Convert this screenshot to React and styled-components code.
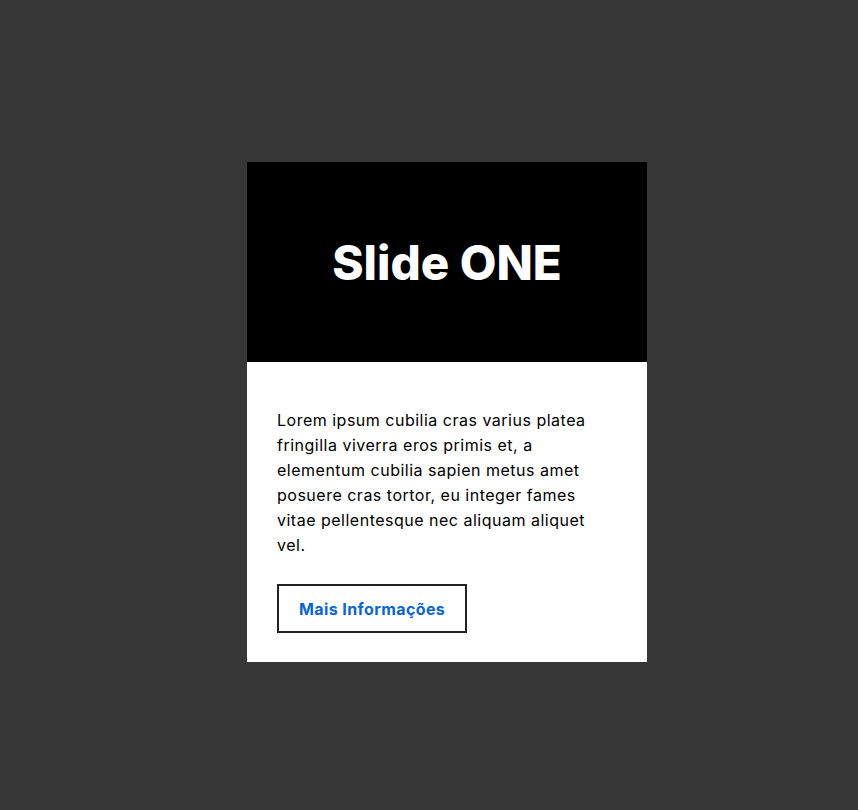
import React from 'react';
import styled, { createGlobalStyle } from 'styled-components';

const GlobalStyle = createGlobalStyle`
  html, body {
    margin: 0;
    background: #373737;
  }
  body {
    font-family: Inter, "Noto Sans", sans-serif;
  }
`;

export default function App() {
  return (
    <StPage>
      <GlobalStyle />
      <StCard>
        <StHeader>
          <h1>Slide ONE</h1>
        </StHeader>
        <StBody>
          <p>
            Lorem ipsum cubilia cras varius platea fringilla viverra eros primis et, a
            elementum cubilia sapien metus amet posuere cras tortor, eu integer fames
            vitae pellentesque nec aliquam aliquet vel.
          </p>
          <StButton type="button">Mais Informações</StButton>
        </StBody>
      </StCard>
    </StPage>
  );
}

const StPage = styled.div`
  box-sizing: border-box;
  min-height: 810px;
  padding: 162px 0 0 247px;
`;

const StCard = styled.div`
  width: 400px;
  height: 500px;
  background: #fff;
  display: flex;
  flex-direction: column;
`;

const StHeader = styled.div`
  flex: none;
  height: 200px;
  background: #000;
  display: flex;
  justify-content: center;
  align-items: center;

  h1 {
    margin: 0;
    color: #fff;
    font-size: 47.5px;
    font-weight: 800;
    letter-spacing: 0;
  }
`;

const StBody = styled.div`
  padding: 30px;

  p {
    margin: 16px 0 26px;
    font-size: 16px;
    line-height: 25px;
    color: #000;
    letter-spacing: 0.5px;
  }
`;

const StButton = styled.button`
  box-sizing: border-box;
  height: 49px;
  padding: 0 20px;
  background: #fff;
  border: 2px solid #222;
  border-radius: 0;
  color: #0a66d0;
  font-family: inherit;
  font-size: 16px;
  font-weight: 700;
  letter-spacing: 0.4px;
  cursor: pointer;
`;
